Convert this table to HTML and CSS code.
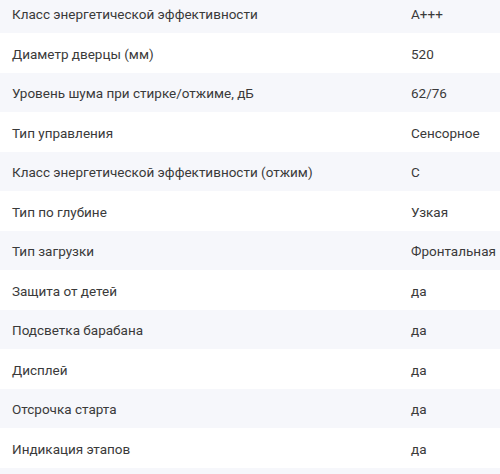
FILE: index.html
```html
<!DOCTYPE html>
<html lang="ru">
<head>
<meta charset="utf-8">
<link rel="stylesheet" href="styles.css">
</head>
<body>
<div class="specs">
  <div class="row"><div class="name">Класс энергетической эффективности</div><div class="val">A+++</div></div>
  <div class="row"><div class="name">Диаметр дверцы (мм)</div><div class="val">520</div></div>
  <div class="row"><div class="name">Уровень шума при стирке/отжиме, дБ</div><div class="val">62/76</div></div>
  <div class="row"><div class="name">Тип управления</div><div class="val">Сенсорное</div></div>
  <div class="row"><div class="name">Класс энергетической эффективности (отжим)</div><div class="val">C</div></div>
  <div class="row"><div class="name">Тип по глубине</div><div class="val">Узкая</div></div>
  <div class="row"><div class="name">Тип загрузки</div><div class="val">Фронтальная</div></div>
  <div class="row"><div class="name">Защита от детей</div><div class="val">да</div></div>
  <div class="row"><div class="name">Подсветка барабана</div><div class="val">да</div></div>
  <div class="row"><div class="name">Дисплей</div><div class="val">да</div></div>
  <div class="row"><div class="name">Отсрочка старта</div><div class="val">да</div></div>
  <div class="row"><div class="name">Индикация этапов</div><div class="val">да</div></div>
  <div class="row"><div class="name">&nbsp;</div><div class="val">&nbsp;</div></div>
</div>
</body>
</html>
```
FILE: styles.css
```css
html, body {
  margin: 0;
  padding: 0;
  background: #ffffff;
  overflow: hidden;
}
.specs {
  margin-top: -6.5px;
  font-family: Roboto, "Noto Sans", sans-serif;
  font-size: 13.5px;
  color: #3a3a3a;
}
.row {
  display: grid;
  grid-template-columns: 399px 1fr;
  height: 39.5px;
  align-items: center;
}
.row:nth-child(odd) {
  background: #f6f7fb;
}
.name, .val {
  padding: 2px 12px 0;
  white-space: nowrap;
  line-height: 20px;
}
.val {
  padding-right: 0;
}
```
